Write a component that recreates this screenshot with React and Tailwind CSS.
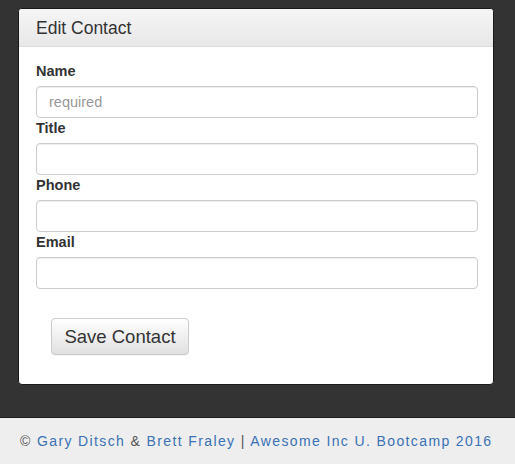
import React from "react";

function Field({ label, placeholder }) {
  return (
    <div>
      <label className="block h-[20px] mb-[5px] text-[14.5px] leading-[20px] font-bold text-[#333]">{label}</label>
      <input
        type="text"
        placeholder={placeholder}
        className="block w-full h-[32px] rounded-[4px] border border-[#ccc] bg-white px-[12px] text-[14.5px] text-[#555] placeholder:text-[#999] outline-none shadow-[inset_0_1px_1px_rgba(0,0,0,0.075)]"
      />
    </div>
  );
}

export default function App() {
  return (
    <div className="min-h-[464px] flex flex-col bg-[#333]" style={{ fontFamily: '"Liberation Sans", Arial, sans-serif' }}>
      <div className="h-[418px] pt-[8px] pl-[18px] pr-[21px] border-b border-[#1e1e1e]">
        <div className="rounded-[4px] border border-[#1a1a1a] bg-white overflow-hidden">
          <div className="h-[38px] pl-[17px] flex items-center bg-gradient-to-b from-[#f5f5f5] to-[#e8e8e8] border-b border-[#ddd]">
            <h3 className="text-[17.5px] text-[#333] leading-[18px]">Edit Contact</h3>
          </div>
          <div className="pt-[14px] pl-[17px] pr-[15px]">
            <Field label="Name" placeholder="required" />
            <Field label="Title" />
            <Field label="Phone" />
            <Field label="Email" />
          </div>
          <div className="pt-[29px] pb-[29px] pl-[32px]">
            <button className="w-[138px] h-[37px] rounded-[4px] border border-[#ccc] bg-gradient-to-b from-white to-[#e0e0e0] text-[18.5px] text-[#333] shadow-[0_1px_1px_rgba(0,0,0,0.05)]">
              Save Contact
            </button>
          </div>
        </div>
      </div>
      <div className="flex-1 h-[46px] bg-[#eeeeee] flex items-center pl-[20px] text-[14px] tracking-[1.38px] text-[#555]">
        <span>©&nbsp;<a className="text-[#3a72b5]">Gary Ditsch</a> &amp; <a className="text-[#3a72b5]">Brett Fraley</a> | <a className="text-[#3a72b5]">Awesome Inc U. Bootcamp 2016</a></span>
      </div>
    </div>
  );
}
